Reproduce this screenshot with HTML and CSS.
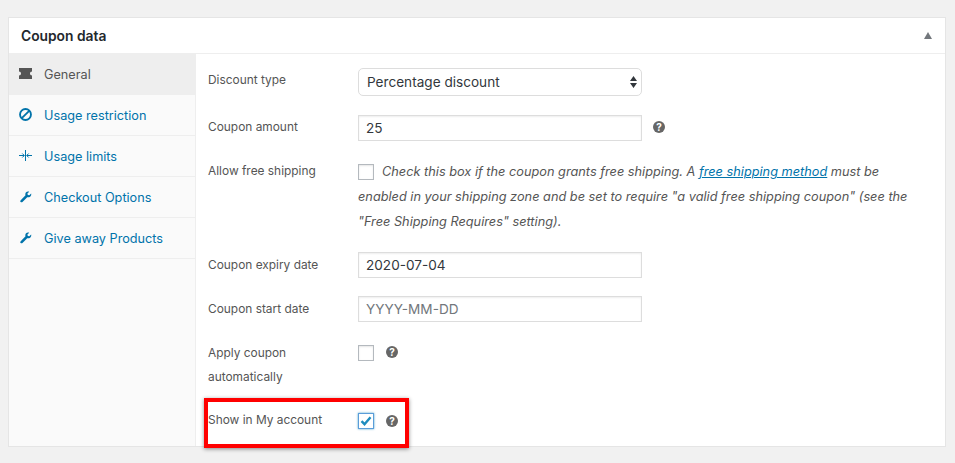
FILE: index.html
```html
<!DOCTYPE html>
<html lang="en">
<head>
    <meta charset="UTF-8">
    <title>Coupon data</title>
    <link rel="stylesheet" href="styles.css">
</head>
<body>
    <div class="postbox">
        <div class="postbox-header">
            <h2>Coupon data</h2>
            <span class="toggle-arrow"></span>
        </div>
        <div class="postbox-body">
            <ul class="tabs">
                <li class="tab active">
                    <svg class="tab-icon" viewBox="0 0 14 14"><path d="M0 1h14v3.800a2.200 2.200 0 0 0 0 4.400V13H0V9.200a2.200 2.200 0 0 0 0-4.400z" fill="currentColor"/></svg>
                    General
                </li>
                <li class="tab">
                    <svg class="tab-icon" viewBox="0 0 14 14"><circle cx="7" cy="7" r="5.900" fill="none" stroke="currentColor" stroke-width="2"/><path d="M3 11l8-8" stroke="currentColor" stroke-width="2"/></svg>
                    Usage restriction
                </li>
                <li class="tab">
                    <svg class="tab-icon" viewBox="0 0 13 13"><path d="M6.500 1v11M0 6.500h5M8 6.500h5M3.300 4.500L5.300 6.500l-2 2M9.700 4.500L7.700 6.500l2 2" fill="none" stroke="currentColor" stroke-width="1"/></svg>
                    Usage limits
                </li>
                <li class="tab">
                    <svg class="tab-icon" viewBox="-1 -1 15 15"><path d="M13 3.100L10.900 5.200 9.200 4.700 8.700 3 10.800.9C9.300.4 7.700.8 6.900 2 6.200 3 6.100 4.200 6.500 5.200L1 10.700c-.7.700-.7 1.500-.1 2.100.6.600 1.500.6 2.100 0l5.500-5.500c1.100.4 2.300.2 3.300-.6 1.200-.9 1.600-2.400 1.200-3.600z" fill="currentColor"/></svg>
                    Checkout Options
                </li>
                <li class="tab">
                    <svg class="tab-icon" viewBox="-1 -1 15 15"><path d="M13 3.100L10.900 5.200 9.200 4.700 8.700 3 10.800.9C9.300.4 7.700.8 6.900 2 6.200 3 6.100 4.200 6.500 5.200L1 10.700c-.7.700-.7 1.500-.1 2.100.6.600 1.500.6 2.100 0l5.500-5.500c1.100.4 2.300.2 3.300-.6 1.200-.9 1.600-2.400 1.200-3.600z" fill="currentColor"/></svg>
                    Give away Products
                </li>
            </ul>
            <div class="panel">
                <div class="field field-select">
                    <label>Discount type</label>
                    <div class="select-box">
                        Percentage discount
                        <svg class="select-arrows" viewBox="0 0 7 12"><path d="M3.500 0L7 5H0zM3.500 12L0 7h7z" fill="currentColor"/></svg>
                    </div>
                </div>
                <div class="field field-amount">
                    <label>Coupon amount</label>
                    <input class="text-input" type="text" value="25">
                    <span class="help">?</span>
                </div>
                <div class="field field-shipping">
                    <label>Allow free shipping</label>
                    <p class="description"><span class="checkbox"></span>Check this box if the coupon grants free shipping. A <a href="#">free shipping method</a> must be enabled in your shipping zone and be set to require "a valid free shipping coupon" (see the "Free Shipping Requires" setting).</p>
                </div>
                <div class="field field-expiry">
                    <label>Coupon expiry date</label>
                    <input class="text-input" type="text" value="2020-07-04">
                </div>
                <div class="field field-start">
                    <label>Coupon start date</label>
                    <input class="text-input" type="text" placeholder="YYYY-MM-DD">
                </div>
                <div class="field field-auto">
                    <label>Apply coupon automatically</label>
                    <span class="checkbox"></span>
                    <span class="help help-check">?</span>
                </div>
                <div class="field field-account">
                    <label>Show in My account</label>
                    <span class="checkbox checked">
                        <svg viewBox="0 0 14 14"><path d="M2.500 7.200l3 3 6-7" fill="none" stroke="currentColor" stroke-width="2.400"/></svg>
                    </span>
                    <span class="help help-check">?</span>
                    <div class="highlight"></div>
                </div>
            </div>
        </div>
    </div>
</body>
</html>
```

FILE: styles.css
```css
* {
    box-sizing: border-box;
}
body {
    font-family: Inter, "Liberation Sans", sans-serif;
    font-size: 12.7px;
    background-color: #f1f1f1;
    color: #555;
    margin: 0;
    padding: 17px 9px 16px 8px;
}
.postbox {
    background-color: white;
    border: 1px solid #e5e5e5;
    height: 430px;
}
.postbox-header {
    display: flex;
    align-items: center;
    justify-content: space-between;
    height: 36px;
    padding: 0 13px 0 12px;
    border-bottom: 1px solid #eee;
}
.postbox-header h2 {
    margin: 0;
    font-size: 13.800px;
    font-weight: 600;
    color: #23282d;
}
.toggle-arrow {
    width: 0;
    height: 0;
    border-left: 4px solid transparent;
    border-right: 4px solid transparent;
    border-bottom: 7px solid #72777c;
}
.postbox-body {
    display: flex;
    height: 392px;
}
.tabs {
    list-style: none;
    margin: 0;
    padding: 0;
    width: 187px;
    flex-shrink: 0;
    background-color: #fafafa;
    border-right: 1px solid #eee;
}
.tab {
    display: flex;
    align-items: center;
    gap: 12px;
    height: 41px;
    padding: 0 0 0 10px;
    color: #0073aa;
    border-bottom: 1px solid #eee;
}
.tab.active {
    color: #555;
    background-color: #eee;
    border-bottom: none;
}
.tab-icon {
    width: 13px;
    height: 13px;
    margin-top: -2px;
    flex-shrink: 0;
}
.panel {
    flex: 1;
    padding: 14px 0 0 12px;
    font-size: 11.9px;
}
.field {
    display: flex;
    align-items: flex-start;
    position: relative;
}
.field label {
    width: 150px;
    flex-shrink: 0;
    line-height: 26px;
}
.select-box {
    display: flex;
    align-items: center;
    justify-content: space-between;
    width: 284px;
    height: 28px;
    padding: 0 4px 0 8px;
    border: 1px solid #ddd;
    border-radius: 5px;
    font-size: 13.600px;
    color: #32373c;
}
.select-arrows {
    width: 7px;
    height: 12px;
    color: #32373c;
}
.text-input {
    width: 284px;
    height: 26px;
    padding: 0 7px;
    border: 1px solid #ddd;
    box-shadow: inset 0 1px 2px rgba(0, 0, 0, 0.07);
    font-family: inherit;
    font-size: 13.600px;
    color: #32373c;
    outline: none;
}
.text-input::placeholder {
    color: #72777c;
}
.help {
    width: 12px;
    height: 12px;
    margin: 6px 0 0 11px;
    border-radius: 50%;
    background-color: #666;
    color: white;
    font-size: 10px;
    font-weight: 700;
    line-height: 12px;
    text-align: center;
}
.help-check {
    margin: 1px 0 0 12px;
}
.checkbox {
    display: block;
    width: 16px;
    height: 16px;
    flex-shrink: 0;
    border: 1px solid #b4b9be;
    box-shadow: inset 0 1px 2px rgba(0, 0, 0, 0.1);
}
.checkbox.checked {
    color: #1e8cbe;
    border-color: #5b9dd9;
    box-shadow: 0 0 2px rgba(30, 140, 190, 0.8);
}
.checkbox svg {
    display: block;
    width: 14px;
    height: 14px;
}
.description {
    margin: -5px 20px 0 0;
    flex: 1;
    font-style: italic;
    line-height: 25px;
    font-size: 12.750px;
}
.description .checkbox {
    display: inline-block;
    margin-right: 8px;
    vertical-align: -4px;
}
.field-amount {
    margin-top: 19px;
}
.field-shipping {
    margin-top: 23px;
}
.field-expiry {
    margin-top: 18px;
}
.field-start {
    margin-top: 18px;
}
.field-auto {
    margin-top: 23px;
}
.field-account {
    margin-top: 24px;
}
.field-select label {
    line-height: 24px;
}
.field-amount label {
    line-height: 24px;
}
.field-shipping label {
    line-height: 14px;
}
.field-auto label {
    margin-top: -4px;
    line-height: 24px;
}
.field-account label {
    line-height: 14px;
}
.field-account .help-check {
    margin-top: 2px;
}
.highlight {
    position: absolute;
    left: -4px;
    top: -15px;
    width: 205px;
    height: 50px;
    border: 4px solid #f00;
    box-shadow: 0 1px 4px rgba(0, 0, 0, 0.45);
}
a {
    color: #0073aa;
}
```
